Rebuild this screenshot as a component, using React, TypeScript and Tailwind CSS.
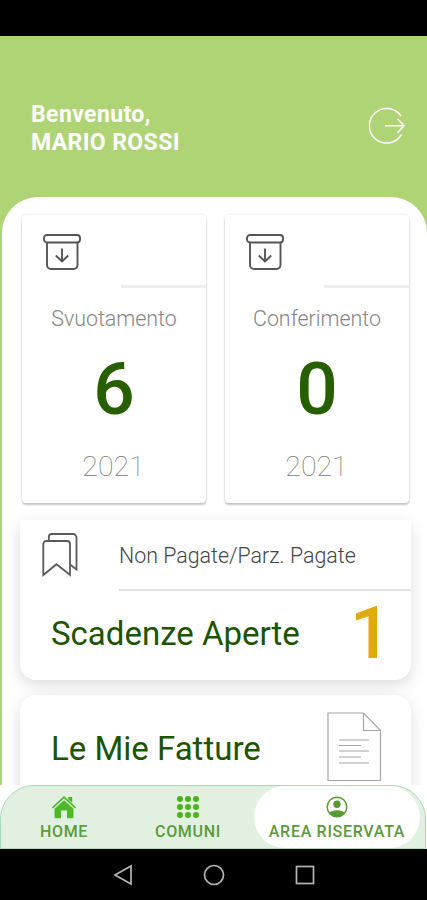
import type { ReactNode } from "react";

interface CounterCardProps {
  label: string;
  value: number;
  year: number;
}

interface NavItemProps {
  label: string;
  active?: boolean;
  children: ReactNode;
}

function LogoutIcon() {
  return (
    <svg width="38" height="38" viewBox="0 0 38 38" fill="none" stroke="white" strokeWidth="1.500">
      <path d="M32 9.200A17.300 17.300 0 1 0 32.500 27.500" />
      <path d="M16 18.700H35M28.500 11.700l6.500 7l-6.500 7" />
    </svg>
  );
}

function BinIcon() {
  return (
    <svg width="38" height="36" viewBox="0 0 38 36" fill="none" stroke="#555" strokeWidth="1.900">
      <rect x="1" y="1" width="36" height="7.500" rx="3" />
      <path d="M4 8.500V31a4 4 0 0 0 4 4H30.500a4 4 0 0 0 4-4V8.500" />
      <path d="M19 14.500V27M12.800 21.500L19 27.500l6.200-6" />
    </svg>
  );
}

function BookmarksIcon() {
  return (
    <svg width="36" height="44" viewBox="0 0 36 44" fill="none" stroke="#5a5a5a" strokeWidth="1.800">
      <path d="M1.300 42V11a3 3 0 0 1 3-3H25a3 3 0 0 1 3 3V42L14.500 31.200Z" />
      <path d="M6.800 8V4a3 3 0 0 1 3-3H31a3.500 3.500 0 0 1 3.500 3.500V36.500L28 31.500" />
    </svg>
  );
}

function InvoiceIcon() {
  return (
    <svg width="55" height="70" viewBox="0 0 55 70" fill="none" stroke="#a2a6aa" strokeWidth="1.200">
      <path d="M1 1H36.500L53.500 18.500V68.500H1Z" />
      <path d="M36.500 1V18.500H53.500" />
      <path d="M12 28H42M12 33.500H34M12 39H42M12 45H34M12 51H42" />
    </svg>
  );
}

function HomeIcon() {
  return (
    <svg width="26" height="24" viewBox="0 0 26 24" fill="#4cb928">
      <path d="M3.500 13.800L13 5.300l9.500 8.500V22a1.200 1.200 0 0 1-1.200 1.200H16V15.500H10V23.200H4.700A1.200 1.200 0 0 1 3.500 22Z" />
      <path d="M1.500 12.800L13 2.200L24.500 12.800" fill="none" stroke="#4cb928" strokeWidth="1.700" />
      <path d="M17.200 2H21.200V7.800L17.200 4.200Z" />
    </svg>
  );
}

function GridIcon() {
  const steps = [3, 11, 19];
  return (
    <svg width="22" height="22" viewBox="0 0 22 22" fill="#4cb01f">
      {steps.map((y) => steps.map((x) => <circle key={`${x}-${y}`} cx={x} cy={y} r="3" />))}
    </svg>
  );
}

function UserIcon() {
  return (
    <svg width="22" height="22" viewBox="0 0 22 22">
      <circle cx="11" cy="11" r="9.800" fill="none" stroke="#589a32" strokeWidth="1.400" />
      <circle cx="11" cy="8.200" r="3.700" fill="#589a32" />
      <path d="M3.500 16.500C7 13.600 15 13.600 18.500 16.500C15 22.300 7 22.300 3.500 16.500Z" fill="#589a32" />
    </svg>
  );
}

function CounterCard({ label, value, year }: CounterCardProps) {
  return (
    <div className="flex h-[288px] w-[184px] flex-col items-center rounded-[4px] bg-white shadow-[0_2px_2px_rgba(0,0,0,0.2),0_0_3px_rgba(0,0,0,0.12)]">
      <div className="h-[70px] w-full pt-[19px] pl-[21px]">
        <BinIcon />
      </div>
      <div className="h-[3px] w-[85px] self-end bg-[#eeeeee]" />
      <p className="mt-[15px] text-[21.4px] leading-[32px] font-light text-[#858585]">{label}</p>
      <p className="mt-[12px] text-[73px] leading-[84px] font-medium text-[#265e00]">{value}</p>
      <p className="mt-[18px] pr-px text-[28.5px] leading-[36px] font-thin text-[#777]">{year}</p>
    </div>
  );
}

function NavItem({ label, active, children }: NavItemProps) {
  return (
    <div
      className={`flex h-[62px] flex-col items-center rounded-[31px] pt-[8px] ${
        active ? "w-[166px] bg-white" : "w-[124px]"
      }`}
    >
      <div className="flex h-[25px] items-center">{children}</div>
      <span className="mt-[2px] text-[16px] leading-[22px] font-medium tracking-[0.7px] whitespace-nowrap text-[#5b9a3c]">
        {label}
      </span>
    </div>
  );
}

export default function App() {
  return (
    <div className="flex h-[900px] w-[427px] flex-col overflow-hidden bg-black font-['Roboto',sans-serif]">
      {/* Status bar */}
      <div className="h-[36px] shrink-0 bg-black" />

      <div className="flex h-[749px] shrink-0 flex-col overflow-hidden bg-[#afd476]">
        {/* Header */}
        <header className="flex h-[161px] shrink-0 justify-between pt-[65px] pr-[20px] pl-[31px] text-white">
          <h1 className="text-[23px] leading-[28px] font-bold tracking-[0.4px]">
            Benvenuto,
            <br />
            MARIO ROSSI
          </h1>
          <div className="pt-[6px]">
            <LogoutIcon />
          </div>
        </header>

        {/* Content */}
        <main className="ml-[2px] h-[588px] w-[425px] shrink-0 overflow-hidden rounded-t-[36px] bg-white pt-[18px] pl-[18px]">
          <div className="flex gap-[19px] pl-[2px]">
            <CounterCard label="Svuotamento" value={6} year={2021} />
            <CounterCard label="Conferimento" value={0} year={2021} />
          </div>

          <section className="mt-[17px] h-[160px] w-[391px] rounded-b-[16px] bg-white shadow-[0_5px_16px_rgba(0,0,0,0.14)]">
            <div className="flex h-[69px] pt-[13px] pl-[22px]">
              <BookmarksIcon />
              <p className="ml-[41px] pt-[7px] text-[21.4px] leading-[32px] font-light whitespace-nowrap text-[#444]">
                Non Pagate/Parz. Pagate
              </p>
            </div>
            <div className="ml-[99px] h-[2px] bg-[#e2e2e2]" />
            <div className="flex justify-between pr-[20px] pl-[31px]">
              <h2 className="pt-[23px] text-[33px] leading-[40px] text-[#1c5400]">Scadenze Aperte</h2>
              <span className="pt-px text-[72px] leading-[84px] font-medium text-[#e0aa0b]">1</span>
            </div>
          </section>

          <section className="mt-[15px] flex h-[160px] w-[391px] justify-between rounded-[16px] bg-white pt-[17px] pr-[29px] pl-[31px] shadow-[0_5px_16px_rgba(0,0,0,0.14)]">
            <h2 className="pt-[17px] text-[33px] leading-[40px] text-[#1c5400]">Le Mie Fatture</h2>
            <InvoiceIcon />
          </section>
        </main>
      </div>

      {/* Bottom tabs */}
      <div className="h-[64px] shrink-0 bg-white">
        <nav className="flex h-[64px] w-[426px] rounded-t-[34px] border border-[#a9d8bd] bg-[#e2f1df] pl-px">
          <NavItem label="HOME">
            <HomeIcon />
          </NavItem>
          <NavItem label="COMUNI">
            <GridIcon />
          </NavItem>
          <div className="w-[4px]" />
          <NavItem label="AREA RISERVATA" active>
            <UserIcon />
          </NavItem>
        </nav>
      </div>

      {/* System buttons */}
      <div className="flex h-[51px] items-center justify-center gap-[70px] bg-black">
        <svg width="20" height="22" viewBox="0 0 20 22" fill="none" stroke="#b5b5b5" strokeWidth="1.700">
          <path d="M18 2V20L2 11Z" />
        </svg>
        <svg width="22" height="22" viewBox="0 0 22 22" fill="none" stroke="#b5b5b5" strokeWidth="1.700">
          <circle cx="11" cy="11" r="9.500" />
        </svg>
        <svg width="20" height="20" viewBox="0 0 20 20" fill="none" stroke="#b5b5b5" strokeWidth="1.700">
          <rect x="1.500" y="1.500" width="17" height="17" />
        </svg>
      </div>
    </div>
  );
}
